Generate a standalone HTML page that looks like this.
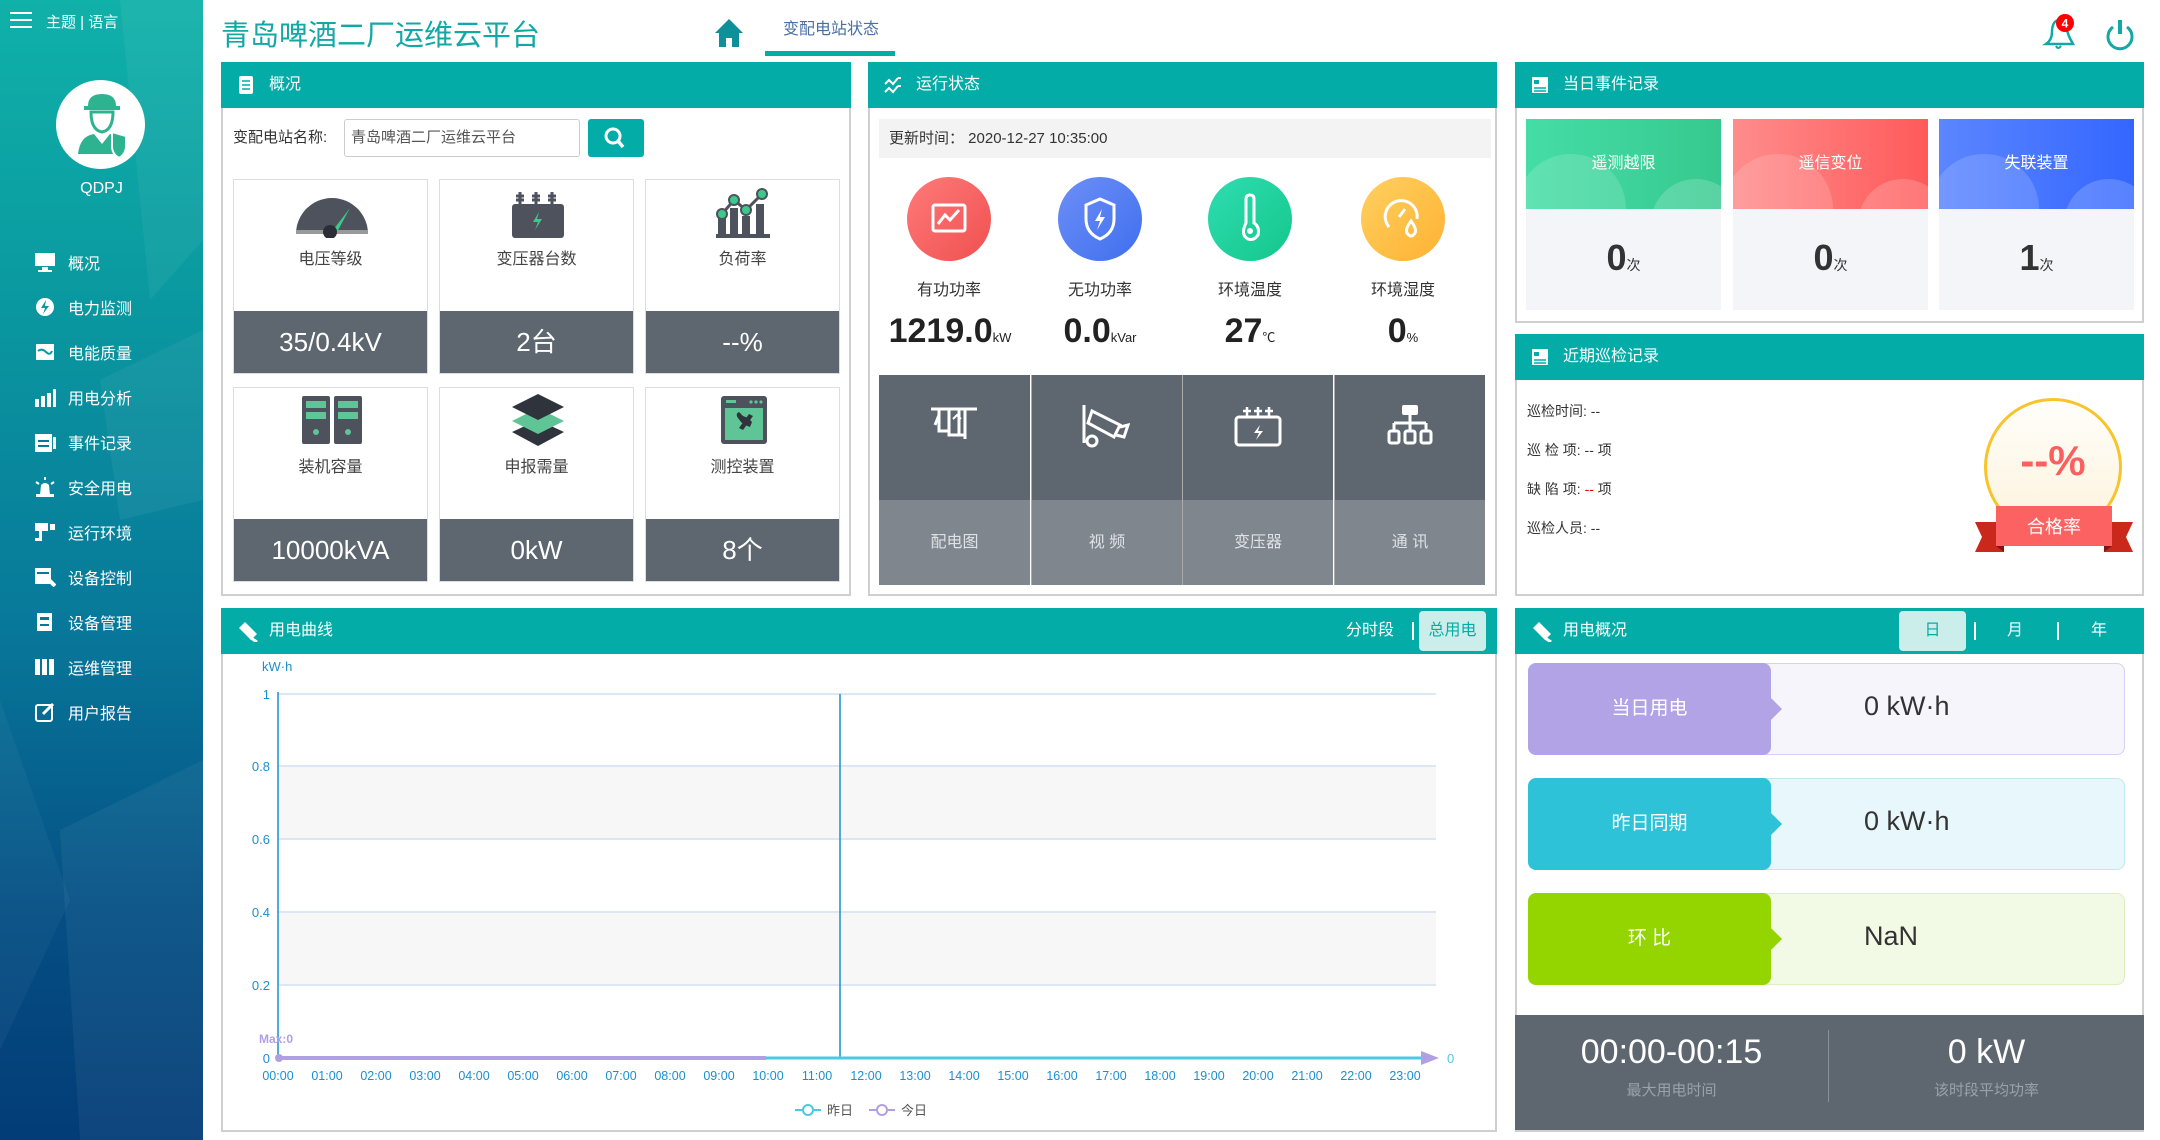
<!DOCTYPE html>
<html><head><meta charset="utf-8">
<style>
*{margin:0;padding:0;box-sizing:border-box}
body{width:2160px;height:1140px;position:relative;background:#fff;font-family:"Liberation Sans","Noto Sans CJK SC",sans-serif;overflow:hidden;color:#333}
.a{position:absolute}
.side{left:0;top:0;width:203px;height:1140px;background:linear-gradient(180deg,#10b1a9 0%,#0a9aa0 25%,#08789a 55%,#054f84 80%,#033c76 100%);overflow:hidden}
.mi{position:absolute;left:34px;color:#fff;font-size:16px;display:flex;align-items:center;height:24px}
.mi i{display:inline-block;width:22px;height:20px;margin-right:12px;position:relative}
.panel{position:absolute;border:2px solid #cfcfcf;border-top:none;background:#fff}
.ph{position:absolute;left:-2px;right:-2px;top:0;height:46px;background:#04aca8;color:#fff;font-size:16px;line-height:46px;padding-left:48px}
.ph .ic{position:absolute;left:16px;top:14px;width:18px;height:18px}
.tile{position:absolute;width:195px;border:1px solid #ddd;background:#fff}
.tile .lb{position:absolute;top:72px;width:100%;text-align:center;font-size:16px;color:#444}
.tile .v{position:absolute;bottom:0;left:0;right:0;height:62px;background:#5e6770;color:#fff;font-size:26px;text-align:center;line-height:62px}
.circ{position:absolute;width:84px;height:84px;border-radius:50%;top:115px}
.clb{position:absolute;top:214px;width:120px;text-align:center;font-size:16px;color:#333}
.cv{position:absolute;top:250px;width:160px;text-align:center;font-size:34px;font-weight:bold;color:#222}
.cv small{font-size:13px;font-weight:normal}
.gc{position:absolute;top:313px;width:151px;height:210px;background:#5e6770}
.gc .b{position:absolute;left:0;right:0;bottom:0;height:85px;background:#7f868d;color:#dfe2e5;font-size:16px;text-align:center;line-height:85px}
.ev{position:absolute;top:119px;width:195px;height:191px;background:#f4f5f9}
.ev .t{height:90px;color:#fff;font-size:16px;text-align:center;line-height:90px;position:relative;overflow:hidden}
.ev .n{text-align:center;font-size:36px;font-weight:bold;color:#333;margin-top:28px}
.ev .n small{font-size:14px;font-weight:normal}
.row{position:absolute;left:11px;width:597px;height:92px;border-radius:8px;border:1px solid}
.row .l{position:absolute;left:-1px;top:-1px;bottom:-1px;width:243px;border-radius:8px;color:#fff;font-size:19px;text-align:center;line-height:92px}
.row .l:after{content:"";position:absolute;right:-11px;top:35px;border-left:11px solid;border-top:11px solid transparent;border-bottom:11px solid transparent;border-left-color:inherit}
.row .val{position:absolute;left:335px;top:-4px;line-height:92px;font-size:27px;color:#333}
</style></head><body>

<div class="a side">
  <svg class="a" style="left:0;top:0" width="203" height="1140"><polygon points="120,0 203,0 203,240 150,300" fill="#fff" opacity=".05"/><polygon points="60,830 203,760 203,1140 80,1140" fill="#fff" opacity=".05"/><polygon points="0,700 70,900 0,1050" fill="#fff" opacity=".04"/><polygon points="100,380 203,330 203,500 120,520" fill="#fff" opacity=".05"/></svg>
  <div class="a" style="left:10px;top:12px;width:22px;height:2px;background:#fff;box-shadow:0 7px 0 #fff,0 14px 0 #fff"></div>
  <div class="a" style="left:46px;top:11px;color:#fff;font-size:15px">主题 | 语言</div>
  <div class="a" style="left:56px;top:80px;width:89px;height:89px;border-radius:50%;background:#fff"></div>
  <svg class="a" style="left:74px;top:92px" width="56" height="66" viewBox="0 0 56 66"><path d="M14 14 Q14 2 28 2 Q42 2 42 14 L46 14 L46 18 L10 18 L10 14Z" fill="#2db38f"/><path d="M17 20 Q17 38 28 40 Q39 38 39 20Z" fill="#fff" stroke="#2db38f" stroke-width="3"/><path d="M4 62 Q6 44 20 42 L28 52 L36 42 Q48 44 50 62Z" fill="#2db38f"/><path d="M38 40 L52 44 L52 54 Q52 62 45 66 Q38 62 38 54Z" fill="#2db38f" stroke="#fff" stroke-width="2"/></svg>
  <div class="a" style="left:0;width:203px;top:180px;text-align:center;color:#fff;font-size:16px">QDPJ</div>
  <div class="mi" style="top:250px"><i><svg width="22" height="20"><rect x="1" y="1" width="20" height="13" fill="#fff"/><rect x="8" y="15" width="6" height="3" fill="#fff"/><rect x="4" y="18" width="14" height="2" fill="#fff"/></svg></i>概况</div>
  <div class="mi" style="top:295px"><i><svg width="22" height="20"><circle cx="11" cy="10" r="9" fill="#fff"/><path d="M12 3 L7 11 L11 11 L9 17 L15 9 L11 9Z" fill="#0a9aa0"/></svg></i>电力监测</div>
  <div class="mi" style="top:340px"><i><svg width="22" height="20"><rect x="2" y="2" width="18" height="16" fill="#fff"/><path d="M4 9 Q8 6 12 10 T18 9" stroke="#0a9aa0" fill="none" stroke-width="2"/></svg></i>电能质量</div>
  <div class="mi" style="top:385px"><i><svg width="22" height="20"><rect x="1" y="12" width="4" height="8" fill="#fff"/><rect x="7" y="9" width="4" height="11" fill="#fff"/><rect x="13" y="6" width="4" height="14" fill="#fff"/><rect x="19" y="2" width="3" height="18" fill="#fff"/></svg></i>用电分析</div>
  <div class="mi" style="top:430px"><i><svg width="22" height="20"><rect x="1" y="2" width="17" height="18" fill="#fff"/><rect x="4" y="8" width="11" height="2" fill="#08789a"/><rect x="4" y="13" width="11" height="2" fill="#08789a"/><rect x="19" y="5" width="3" height="12" fill="#fff"/></svg></i>事件记录</div>
  <div class="mi" style="top:475px"><i><svg width="22" height="20"><path d="M6 18 L7 8 Q11 4 15 8 L16 18Z" fill="#fff"/><rect x="2" y="17" width="18" height="3" fill="#fff"/><path d="M11 0 V3 M2 5 L5 7 M20 5 L17 7" stroke="#fff" stroke-width="2"/></svg></i>安全用电</div>
  <div class="mi" style="top:520px"><i><svg width="22" height="20"><rect x="1" y="1" width="13" height="8" fill="#fff"/><rect x="16" y="2" width="5" height="6" fill="#fff"/><rect x="5" y="9" width="3" height="10" fill="#fff"/><rect x="1" y="16" width="6" height="3" fill="#fff"/></svg></i>运行环境</div>
  <div class="mi" style="top:565px"><i><svg width="22" height="20"><rect x="1" y="1" width="16" height="16" fill="#fff"/><rect x="3" y="5" width="12" height="2" fill="#08789a"/><path d="M12 10 L21 19" stroke="#fff" stroke-width="4"/></svg></i>设备控制</div>
  <div class="mi" style="top:610px"><i><svg width="22" height="20"><rect x="3" y="1" width="15" height="18" fill="#fff"/><rect x="6" y="5" width="9" height="3" fill="#08789a"/><rect x="6" y="12" width="9" height="2" fill="#08789a"/></svg></i>设备管理</div>
  <div class="mi" style="top:655px"><i><svg width="22" height="20"><rect x="1" y="2" width="5" height="16" fill="#fff"/><rect x="8" y="2" width="5" height="16" fill="#fff"/><rect x="15" y="2" width="5" height="16" fill="#fff"/></svg></i>运维管理</div>
  <div class="mi" style="top:700px"><i><svg width="22" height="20"><rect x="2" y="3" width="16" height="16" rx="2" fill="none" stroke="#fff" stroke-width="2"/><path d="M9 12 L19 2" stroke="#fff" stroke-width="3"/></svg></i>用户报告</div>
</div>

<!-- header -->
<div class="a" style="left:221px;top:12px;font-size:29px;color:#13a8a6">青岛啤酒二厂运维云平台</div>
<svg class="a" style="left:714px;top:18px" width="30" height="30" viewBox="0 0 30 30"><path d="M15 1 L29 15 L25 15 L25 29 L18 29 L18 20 L12 20 L12 29 L5 29 L5 15 L1 15Z" fill="#0e8f9a"/></svg>
<div class="a" style="left:783px;top:15px;font-size:16px;color:#4a6fa5">变配电站状态</div>
<div class="a" style="left:765px;top:51px;width:130px;height:5px;background:#04aca8"></div>
<svg class="a" style="left:2040px;top:12px" width="40" height="42" viewBox="0 0 40 42"><path d="M6 32 Q12 28 12 20 Q12 10 18 8 Q24 10 26 14 Q28 24 32 30 L33 32Z" fill="none" stroke="#13a8a6" stroke-width="2.5"/><path d="M16 34 Q18 38 21 34" stroke="#13a8a6" fill="none" stroke-width="2"/><circle cx="25" cy="11" r="9" fill="#f00"/><text x="25" y="15.5" font-size="12" fill="#fff" text-anchor="middle" font-weight="bold" font-family="Liberation Sans">4</text></svg>
<svg class="a" style="left:2104px;top:18px" width="32" height="34" viewBox="0 0 32 34"><path d="M9 9 A12 12 0 1 0 23 9" fill="none" stroke="#13a8a6" stroke-width="3"/><line x1="16" y1="2" x2="16" y2="16" stroke="#13a8a6" stroke-width="4"/></svg>

<!-- panel 1 -->
<div class="panel" style="left:221px;top:62px;width:630px;height:534px">
  <div class="ph"><svg class="ic" viewBox="0 0 18 18"><rect x="2" y="0" width="14" height="18" rx="2" fill="#fff"/><path d="M5 5H13M5 9H13M5 13H13" stroke="#04aca8" stroke-width="1.6"/></svg>概况</div>
  <div class="a" style="left:10px;top:57px;font-size:15px;line-height:38px;color:#333">变配电站名称:</div>
  <div class="a" style="left:121px;top:57px;width:236px;height:38px;border:1px solid #ccc;border-radius:3px;font-size:15px;line-height:36px;padding-left:6px;color:#555">青岛啤酒二厂运维云平台</div>
  <div class="a" style="left:365px;top:57px;width:56px;height:38px;background:#04aca8;border-radius:3px"><svg width="56" height="38"><circle cx="25" cy="17" r="7" fill="none" stroke="#fff" stroke-width="3"/><path d="M30 22 L35 28" stroke="#fff" stroke-width="3.5"/></svg></div>

  <div class="tile" style="left:10px;top:117px;height:195px"><svg class="a" style="left:58px;top:10px" width="80" height="48" viewBox="0 0 80 48"><path d="M4 44 A36 36 0 0 1 76 44Z" fill="#4d525c"/><rect x="4" y="40" width="72" height="4" fill="#999"/><path d="M38 44 L58 18 L44 44Z" fill="#3cc98c"/><circle cx="38" cy="42" r="7" fill="#2b2e36"/></svg><div class="lb" style="top:65px">电压等级</div><div class="v">35/0.4kV</div></div>
  <div class="tile" style="left:216px;top:117px;height:195px"><svg class="a" style="left:68px;top:10px" width="60" height="48" viewBox="0 0 60 48"><rect x="4" y="14" width="52" height="34" rx="3" fill="#4d525c"/><path d="M12 2V14M28 2V14M44 2V14M8 6H16M24 6H32M40 6H48M8 10H16M24 10H32M40 10H48" stroke="#4d525c" stroke-width="3"/><path d="M31 22 L25 32 L30 32 L27 40 L34 29 L29 29Z" fill="#3cc98c"/></svg><div class="lb" style="top:65px">变压器台数</div><div class="v">2台</div></div>
  <div class="tile" style="left:422px;top:117px;height:195px"><svg class="a" style="left:70px;top:6px" width="56" height="54" viewBox="0 0 56 54"><rect x="2" y="28" width="8" height="20" fill="#4d525c"/><rect x="14" y="22" width="8" height="26" fill="#4d525c"/><rect x="26" y="30" width="8" height="18" fill="#4d525c"/><rect x="40" y="18" width="8" height="30" fill="#4d525c"/><rect x="0" y="48" width="54" height="4" fill="#4d525c"/><path d="M6 28 L18 14 L30 24 L46 8" stroke="#4d525c" stroke-width="3" fill="none"/><circle cx="6" cy="28" r="5" fill="#3cc98c" stroke="#4d525c" stroke-width="2"/><circle cx="18" cy="14" r="5" fill="#3cc98c" stroke="#4d525c" stroke-width="2"/><circle cx="30" cy="24" r="5" fill="#3cc98c" stroke="#4d525c" stroke-width="2"/><circle cx="46" cy="8" r="5" fill="#3cc98c" stroke="#4d525c" stroke-width="2"/></svg><div class="lb" style="top:65px">负荷率</div><div class="v">--%</div></div>

  <div class="tile" style="left:10px;top:325px;height:195px"><svg class="a" style="left:68px;top:8px" width="60" height="48" viewBox="0 0 60 48"><rect x="0" y="0" width="28" height="48" rx="2" fill="#4d525c"/><rect x="32" y="0" width="28" height="48" rx="2" fill="#4d525c"/><rect x="4" y="5" width="20" height="7" fill="#5fc496"/><rect x="4" y="16" width="20" height="7" fill="#5fc496"/><rect x="36" y="5" width="20" height="7" fill="#5fc496"/><rect x="36" y="16" width="20" height="7" fill="#5fc496"/><circle cx="14" cy="36" r="3" fill="#5fc496"/><circle cx="46" cy="36" r="3" fill="#5fc496"/></svg><div class="lb" style="top:65px">装机容量</div><div class="v">10000kVA</div></div>
  <div class="tile" style="left:216px;top:325px;height:195px"><svg class="a" style="left:70px;top:6px" width="56" height="52" viewBox="0 0 56 52"><path d="M28 26 L54 38 L28 52 L2 38Z" fill="#2f333b"/><path d="M28 14 L54 27 L28 40 L2 27Z" fill="#5fc496"/><path d="M28 0 L54 13 L28 26 L2 13Z" fill="#2f333b"/></svg><div class="lb" style="top:65px">申报需量</div><div class="v">0kW</div></div>
  <div class="tile" style="left:422px;top:325px;height:195px"><svg class="a" style="left:75px;top:8px" width="46" height="48" viewBox="0 0 46 48"><rect x="0" y="0" width="46" height="48" rx="3" fill="#4d525c"/><rect x="4" y="12" width="38" height="32" fill="#5fc496"/><path d="M17 22 Q14 18 18 16 L22 20 L27 22 L31 26 L29 31 L24 29 L20 26Z M28 18 L32 20 L22 34 L18 32Z" fill="#2f333b"/><rect x="5" y="4" width="10" height="3" fill="#5fc496"/><circle cx="30" cy="6" r="1.6" fill="#5fc496"/><circle cx="35" cy="6" r="1.6" fill="#5fc496"/><circle cx="40" cy="6" r="1.6" fill="#5fc496"/></svg><div class="lb" style="top:65px">测控装置</div><div class="v">8个</div></div>
</div>

<!-- panel 2 -->
<div class="panel" style="left:868px;top:62px;width:629px;height:534px">
  <div class="ph"><svg class="ic" viewBox="0 0 18 18"><path d="M1 8 L5 4 L9 8 L14 2 M1 16 L5 12 L9 16 L14 10" stroke="#fff" stroke-width="2" fill="none"/><path d="M14 2 L17 2 M14 10 L17 10" stroke="#fff" stroke-width="2"/></svg>运行状态</div>
  <div class="a" style="left:9px;top:57px;width:612px;height:39px;background:#f3f3f3;font-size:15px;line-height:39px;padding-left:10px;color:#333">更新时间：&nbsp;2020-12-27 10:35:00</div>
  <div class="circ" style="left:37px;background:linear-gradient(135deg,#ff7a7a,#f05050)"><svg width="84" height="84"><rect x="26" y="28" width="32" height="26" rx="2" fill="none" stroke="#fff" stroke-width="3"/><path d="M31 47 L38 38 L43 43 L52 33" stroke="#fff" stroke-width="3" fill="none"/></svg></div>
  <div class="circ" style="left:188px;background:linear-gradient(135deg,#6d8ff7,#3f6fee)"><svg width="84" height="84"><path d="M42 22 L56 28 L56 42 Q56 56 42 62 Q28 56 28 42 L28 28Z" fill="none" stroke="#fff" stroke-width="3"/><path d="M44 32 L37 44 L42 44 L39 53 L47 40 L42 40Z" fill="#fff"/></svg></div>
  <div class="circ" style="left:338px;background:linear-gradient(135deg,#2fdcb0,#14c78c)"><svg width="84" height="84"><path d="M38 22 Q38 18 42 18 Q46 18 46 22 L46 46 Q52 50 50 58 Q46 64 40 62 Q32 58 38 46Z" fill="none" stroke="#fff" stroke-width="3"/><circle cx="42" cy="54" r="3" fill="#fff"/></svg></div>
  <div class="circ" style="left:491px;background:linear-gradient(135deg,#ffd060,#fdb232)"><svg width="84" height="84"><path d="M28 50 A16 16 0 1 1 56 42" fill="none" stroke="#fff" stroke-width="3"/><path d="M38 40 L44 32" stroke="#fff" stroke-width="3"/><path d="M50 44 Q56 52 54 56 Q50 62 46 56 Q44 52 50 44Z" fill="none" stroke="#fff" stroke-width="3"/></svg></div>
  <div class="clb" style="left:19px">有功功率</div>
  <div class="clb" style="left:170px">无功功率</div>
  <div class="clb" style="left:320px">环境温度</div>
  <div class="clb" style="left:473px">环境湿度</div>
  <div class="cv" style="left:0px">1219.0<small>kW</small></div>
  <div class="cv" style="left:150px">0.0<small>kVar</small></div>
  <div class="cv" style="left:300px">27<small>℃</small></div>
  <div class="cv" style="left:453px">0<small>%</small></div>
  <div class="gc" style="left:9px"><svg class="a" style="left:50px;top:30px" width="52" height="40" viewBox="0 0 52 40"><path d="M2 4H48M10 4V26H20V4M10 10L6 20M20 10V30H36V4M30 4V30M36 4V34" stroke="#fff" stroke-width="3" fill="none"/><path d="M24 14L28 10L32 14" stroke="#fff" stroke-width="2" fill="none"/></svg><div class="b">配电图</div></div>
  <div class="gc" style="left:161px;border-left:1px solid #aaa"><svg class="a" style="left:48px;top:28px" width="50" height="46" viewBox="0 0 50 46"><path d="M4 2V40" stroke="#fff" stroke-width="3"/><circle cx="12" cy="38" r="5" fill="none" stroke="#fff" stroke-width="3"/><path d="M12 8 L40 22 L34 34 L8 20Z" fill="none" stroke="#fff" stroke-width="3"/><path d="M40 24 L48 22 L44 34 L36 32" fill="none" stroke="#fff" stroke-width="3"/></svg><div class="b">视 频</div></div>
  <div class="gc" style="left:312px;border-left:1px solid #aaa"><svg class="a" style="left:50px;top:30px" width="50" height="42" viewBox="0 0 50 42"><rect x="3" y="12" width="44" height="28" rx="3" fill="none" stroke="#fff" stroke-width="3"/><path d="M14 2V12M25 2V12M36 2V12M10 6H18M21 6H29M32 6H40" stroke="#fff" stroke-width="2.5"/><path d="M27 20L21 28H26L23 35L30 26H25Z" fill="#fff"/></svg><div class="b">变压器</div></div>
  <div class="gc" style="left:464px;border-left:1px solid #aaa"><svg class="a" style="left:52px;top:28px" width="46" height="42" viewBox="0 0 46 42"><rect x="15" y="2" width="16" height="10" rx="2" fill="#fff"/><path d="M23 12V20M7 20H39M7 20V28M23 20V28M39 20V28" stroke="#fff" stroke-width="3" fill="none"/><rect x="2" y="28" width="10" height="12" rx="2" fill="none" stroke="#fff" stroke-width="3"/><rect x="18" y="28" width="10" height="12" rx="2" fill="none" stroke="#fff" stroke-width="3"/><rect x="34" y="28" width="10" height="12" rx="2" fill="none" stroke="#fff" stroke-width="3"/></svg><div class="b">通 讯</div></div>
</div>

<!-- panel 3 -->
<div class="panel" style="left:1515px;top:62px;width:629px;height:261px">
  <div class="ph"><svg class="ic" viewBox="0 0 18 18"><rect x="1" y="1" width="16" height="16" rx="1" fill="#fff"/><rect x="3" y="4" width="5" height="4" fill="#04aca8"/><path d="M3 12H15M3 15H15" stroke="#04aca8" stroke-width="1.5"/></svg>当日事件记录</div>
</div>
<div class="ev" style="left:1526px;width:195px"><div class="t" style="background:linear-gradient(90deg,#45dda6,#36c98f)"><div class="a" style="left:-10px;top:35px;width:110px;height:110px;border-radius:50%;background:rgba(255,255,255,.15)"></div><div class="a" style="left:125px;top:60px;width:90px;height:90px;border-radius:50%;background:rgba(255,255,255,.18)"></div><span style="position:relative">遥测越限</span></div><div class="n">0<small>次</small></div></div>
<div class="ev" style="left:1733px;width:195px"><div class="t" style="background:linear-gradient(90deg,#ff8c8c,#ff5a5a)"><div class="a" style="left:-10px;top:35px;width:110px;height:110px;border-radius:50%;background:rgba(255,255,255,.15)"></div><div class="a" style="left:125px;top:60px;width:90px;height:90px;border-radius:50%;background:rgba(255,255,255,.18)"></div><span style="position:relative">遥信变位</span></div><div class="n">0<small>次</small></div></div>
<div class="ev" style="left:1939px;width:195px"><div class="t" style="background:linear-gradient(90deg,#5b86ff,#3466ff)"><div class="a" style="left:-10px;top:35px;width:110px;height:110px;border-radius:50%;background:rgba(255,255,255,.15)"></div><div class="a" style="left:125px;top:60px;width:90px;height:90px;border-radius:50%;background:rgba(255,255,255,.18)"></div><span style="position:relative">失联装置</span></div><div class="n">1<small>次</small></div></div>

<!-- panel 4 -->
<div class="panel" style="left:1515px;top:334px;width:629px;height:262px">
  <div class="ph"><svg class="ic" viewBox="0 0 18 18"><rect x="1" y="1" width="16" height="16" rx="1" fill="#fff"/><rect x="3" y="4" width="5" height="4" fill="#04aca8"/><path d="M3 12H15M3 15H15" stroke="#04aca8" stroke-width="1.5"/></svg>近期巡检记录</div>
  <div class="a" style="left:10px;top:67px;font-size:14px;line-height:20px;color:#333">巡检时间: --</div>
  <div class="a" style="left:10px;top:106px;font-size:14px;line-height:20px;color:#333">巡 检 项: -- 项</div>
  <div class="a" style="left:10px;top:145px;font-size:14px;line-height:20px;color:#333">缺 陷 项: <span style="color:#e00">--</span> 项</div>
  <div class="a" style="left:10px;top:184px;font-size:14px;line-height:20px;color:#333">巡检人员: --</div>
</div>
<div class="a" style="left:1984px;top:398px;width:138px;height:138px;border-radius:50%;border:3px solid #f8c42c;background:linear-gradient(180deg,#fffefa,#fdf3dc)"></div>
<div class="a" style="left:1984px;top:437px;width:138px;text-align:center;font-size:42px;font-weight:bold;color:#fb5f5f">--%</div>
<svg class="a" style="left:1974px;top:505px" width="160" height="50" viewBox="0 0 160 50"><path d="M1 17H30V47H1L8 32Z" fill="#c9281a"/><path d="M159 17H130V47H159L152 32Z" fill="#c9281a"/><path d="M22 41H30V47Z" fill="#8a1010"/><path d="M138 41H130V47Z" fill="#8a1010"/><rect x="22" y="1" width="116" height="40" fill="#fd6262"/><text x="80" y="28" font-size="18" fill="#fff" text-anchor="middle" font-family="Liberation Sans,Noto Sans CJK SC,sans-serif">合格率</text></svg>

<!-- panel 5 chart -->
<div class="panel" style="left:221px;top:608px;width:1276px;height:524px">
  <div class="ph"><svg class="ic" style="width:22px;height:22px;top:12px" viewBox="0 0 22 22"><path d="M3 3 L12 12 M8 2 L20 14 L14 20 L2 8Z" fill="#fff"/><path d="M14 18 L20 22" stroke="#fff" stroke-width="3"/></svg>用电曲线
    <div class="a" style="left:1125px;top:0;font-size:16px">分时段</div>
    <div class="a" style="left:1191px;top:14px;width:2px;height:18px;background:#fff"></div>
    <div class="a" style="left:1198px;top:3px;width:67px;height:40px;background:#cbeeeb;border-radius:4px;color:#04aca8;text-align:center;line-height:40px;font-size:16px">总用电</div>
  </div>
</div>
<svg class="a" style="left:221px;top:608px" width="1276" height="524">
  <g font-family="Liberation Sans,sans-serif" font-size="13" fill="#1a8fd0">
  <rect x="57" y="158" width="1158" height="73" fill="#f7f7f7"/>
  <rect x="57" y="304" width="1158" height="73" fill="#f7f7f7"/>
  <g stroke="#dbe7f2" stroke-width="2"><line x1="57" y1="86" x2="1215" y2="86"/><line x1="57" y1="158" x2="1215" y2="158"/><line x1="57" y1="231" x2="1215" y2="231"/><line x1="57" y1="304" x2="1215" y2="304"/><line x1="57" y1="377" x2="1215" y2="377"/></g>
  <line x1="57" y1="84" x2="57" y2="452" stroke="#1a8fd0" stroke-width="1.5"/>
  <line x1="619" y1="86" x2="619" y2="450" stroke="#1a8fd0" stroke-width="1.5"/>
  <text x="41" y="63">kW·h</text>
  <g text-anchor="end"><text x="49" y="91">1</text><text x="49" y="163">0.8</text><text x="49" y="236">0.6</text><text x="49" y="309">0.4</text><text x="49" y="382">0.2</text><text x="49" y="455">0</text></g>
  <line x1="57" y1="450" x2="1210" y2="450" stroke="#4dc8e0" stroke-width="3"/>
  <line x1="57" y1="450" x2="545" y2="450" stroke="#b19fe6" stroke-width="4"/>
  <path d="M1200 443 L1218 450 L1200 457Z" fill="#b19fe6"/>
  <circle cx="58" cy="450" r="4" fill="#b19fe6"/>
  <text x="1226" y="455" fill="#4dc8e0">0</text>
  <text x="38" y="435" fill="#b19fe6" font-size="12" font-weight="bold">Max:0</text>
  <g font-size="12.5" text-anchor="middle">
  <text x="57" y="472">00:00</text><text x="106" y="472">01:00</text><text x="155" y="472">02:00</text><text x="204" y="472">03:00</text><text x="253" y="472">04:00</text><text x="302" y="472">05:00</text><text x="351" y="472">06:00</text><text x="400" y="472">07:00</text><text x="449" y="472">08:00</text><text x="498" y="472">09:00</text><text x="547" y="472">10:00</text><text x="596" y="472">11:00</text><text x="645" y="472">12:00</text><text x="694" y="472">13:00</text><text x="743" y="472">14:00</text><text x="792" y="472">15:00</text><text x="841" y="472">16:00</text><text x="890" y="472">17:00</text><text x="939" y="472">18:00</text><text x="988" y="472">19:00</text><text x="1037" y="472">20:00</text><text x="1086" y="472">21:00</text><text x="1135" y="472">22:00</text><text x="1184" y="472">23:00</text></g>
  <line x1="574" y1="502" x2="600" y2="502" stroke="#4dc8e0" stroke-width="2"/><circle cx="587" cy="502" r="5" fill="#fff" stroke="#4dc8e0" stroke-width="2"/>
  <text x="606" y="507" fill="#555" font-family="Liberation Sans,Noto Sans CJK SC,sans-serif">昨日</text>
  <line x1="648" y1="502" x2="674" y2="502" stroke="#b19fe6" stroke-width="2"/><circle cx="661" cy="502" r="5" fill="#fff" stroke="#b19fe6" stroke-width="2"/>
  <text x="680" y="507" fill="#555" font-family="Liberation Sans,Noto Sans CJK SC,sans-serif">今日</text>
  </g>
</svg>

<!-- panel 6 -->
<div class="panel" style="left:1515px;top:608px;width:629px;height:524px">
  <div class="ph"><svg class="ic" style="width:22px;height:22px;top:12px" viewBox="0 0 22 22"><path d="M8 2 L20 14 L14 20 L2 8Z" fill="#fff"/><path d="M14 18 L20 22" stroke="#fff" stroke-width="3"/></svg>用电概况
    <div class="a" style="left:384px;top:3px;width:67px;height:40px;background:#cbeeeb;border-radius:4px;color:#04aca8;text-align:center;line-height:40px;font-size:16px">日</div>
    <div class="a" style="left:459px;top:14px;width:2px;height:18px;background:#fff"></div>
    <div class="a" style="left:492px;top:0;font-size:16px">月</div>
    <div class="a" style="left:542px;top:14px;width:2px;height:18px;background:#fff"></div>
    <div class="a" style="left:576px;top:0;font-size:16px">年</div>
  </div>
  <div class="row" style="top:55px;background:#f6f5fc;border-color:#d8d0f2"><div class="l" style="background:#b2a3e6;border-left-color:#b2a3e6">当日用电</div><div class="val">0 kW·h</div></div>
  <div class="row" style="top:170px;background:#e8f7fb;border-color:#bfe8f2"><div class="l" style="background:#2ec2d8;border-left-color:#2ec2d8">昨日同期</div><div class="val">0 kW·h</div></div>
  <div class="row" style="top:285px;background:#f2f9e5;border-color:#dcefbf"><div class="l" style="background:#94d500;border-left-color:#94d500">环 比</div><div class="val">NaN</div></div>
  <div class="a" style="left:-2px;right:-2px;top:407px;height:115px;background:#5e6770">
    <div class="a" style="left:0;width:313px;top:18px;text-align:center;color:#fff;font-size:34px">00:00-00:15</div>
    <div class="a" style="left:0;width:313px;top:64px;text-align:center;color:#9aa1a8;font-size:15px">最大用电时间</div>
    <div class="a" style="left:313px;top:15px;width:1px;height:72px;background:#8a9096"></div>
    <div class="a" style="left:314px;width:315px;top:18px;text-align:center;color:#fff;font-size:34px">0 kW</div>
    <div class="a" style="left:314px;width:315px;top:64px;text-align:center;color:#9aa1a8;font-size:15px">该时段平均功率</div>
  </div>
</div>

</body></html>
